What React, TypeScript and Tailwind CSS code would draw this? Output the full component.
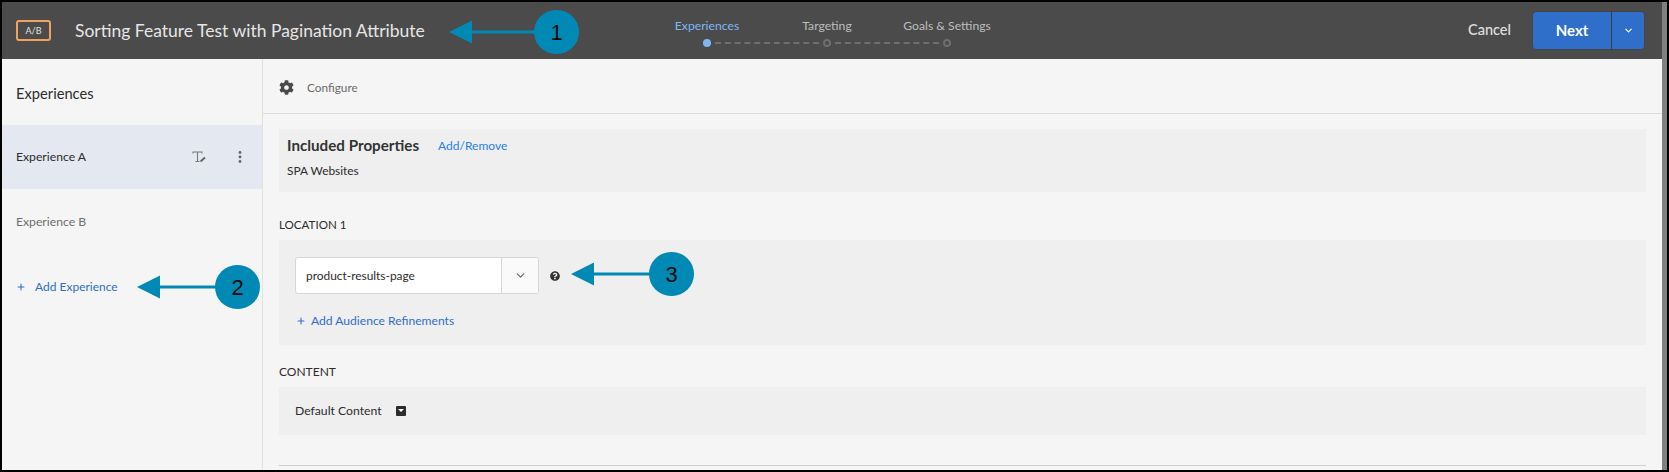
import { ChevronDown, Plus } from "lucide-react";
import { FaCog, FaQuestionCircle } from "react-icons/fa";

function Arrow({ length }: { length: number }) {
  return (
    <svg width={length} height="24" viewBox={`0 0 ${length} 24`} className="shrink-0">
      <path d={`M0 12 L23 0.5 V10.5 H${length} V13.5 H23 V23.5 Z`} fill="#0089b5" />
    </svg>
  );
}

function Badge({ n }: { n: number }) {
  return (
    <div className="-ml-px flex h-[44px] w-[45px] shrink-0 items-center justify-center rounded-full bg-[#0089b5] font-['Liberation_Sans',sans-serif] text-[22px] text-[#0a0a0a]">
      {n}
    </div>
  );
}

function TextEditIcon() {
  return (
    <svg width="14" height="12" viewBox="0 0 14 12" fill="none">
      <path d="M1 2.5V1H10V2.5M5.5 1V10.5M3.5 10.5H7.5" stroke="#777" strokeWidth="1.1" />
      <path d="M8.5 10.5 L13 6.5" stroke="#666" strokeWidth="2" />
    </svg>
  );
}

function Stepper() {
  const steps = [
    { label: "Experiences", active: true },
    { label: "Targeting", active: false },
    { label: "Goals & Settings", active: false },
  ];
  return (
    <div className="relative grid h-[32px] w-[360px] grid-cols-3 pt-[2px]">
      {steps.map((s) => (
        <div key={s.label} className="flex flex-col items-center">
          <span className={s.active ? "whitespace-nowrap text-[12.2px] leading-[18px] text-[#7fb7f5]" : "whitespace-nowrap text-[12.2px] leading-[18px] text-[#bdbdbd]"}>
            {s.label}
          </span>
          <span className={s.active ? "mt-[4px] h-2 w-2 rounded-full bg-[#7fb7f5]" : "mt-[4px] h-2 w-2 rounded-full border-2 border-[#6e6e6e]"} />
        </div>
      ))}
      <div className="absolute left-[68px] top-[27px] h-0 w-[104px] border-t-2 border-dashed border-[#6e6e6e]" />
      <div className="absolute left-[188px] top-[27px] h-0 w-[104px] border-t-2 border-dashed border-[#6e6e6e]" />
    </div>
  );
}

function Header() {
  return (
    <header className="flex h-[57px] shrink-0 items-center bg-[#4b4b4b]">
      <div className="flex w-[645px] shrink-0 items-center pl-[14px]">
        <div className="flex h-[21px] w-[35px] items-center justify-center rounded-[3px] border-2 border-[#f0a35e] text-[9px] text-[#e0e0e0]">
          A/B
        </div>
        <h1 className="ml-[24px] whitespace-nowrap pt-[1px] text-[17.5px] font-normal text-[#e6e6e6]">
          Sorting Feature Test with Pagination Attribute
        </h1>
      </div>
      <Stepper />
      <div className="ml-auto flex items-center pb-[1px] pr-[17px]">
        <span className="text-[14.5px] font-medium text-[#e0e0e0]">Cancel</span>
        <div className="ml-[21px] flex h-[39px] w-[113px] overflow-hidden rounded-[4px] border border-[#444] bg-[#2f6ec9] text-white">
          <span className="flex w-[79px] items-center justify-center border-r border-[#3d3d3d] text-[15px] font-bold">Next</span>
          <span className="flex flex-1 items-center justify-center">
            <ChevronDown size={11} strokeWidth={2.5} />
          </span>
        </div>
      </div>
    </header>
  );
}

function Sidebar() {
  return (
    <aside className="w-[261px] shrink-0 border-r border-[#e1e1e1]">
      <div className="flex h-[66px] items-center pl-[14px] pt-[3px] text-[14.7px] text-[#2c2c2c]">Experiences</div>
      <div className="flex h-[64px] items-center bg-[#e4e8f0] pl-[14px] text-[12.2px] text-[#2c2c2c]">
        <span className="w-[176px]">Experience A</span>
        <TextEditIcon />
        <svg width="4" height="12" viewBox="0 0 4 12" className="ml-[32px]" fill="#666">
          <circle cx="2" cy="1.5" r="1.4" />
          <circle cx="2" cy="6" r="1.4" />
          <circle cx="2" cy="10.5" r="1.4" />
        </svg>
      </div>
      <div className="flex h-[66px] items-center pl-[14px] text-[12.2px] text-[#6e6e6e]">Experience B</div>
      <div className="flex h-[64px] items-center pl-[14px] text-[12px] text-[#2f6ec9]">
        <Plus size={10} strokeWidth={2.5} />
        <span className="ml-[9px]">Add Experience</span>
      </div>
    </aside>
  );
}

function Main() {
  return (
    <main className="min-w-0 flex-1">
      <div className="flex h-[55px] items-center border-b border-[#dcdcdc] pl-[16px] pt-[3px] text-[11.8px] text-[#6b6b6b]">
        <FaCog size={15} className="text-[#4a4a4a]" />
        <span className="ml-[13px]">Configure</span>
      </div>
      <div className="pl-[16px] pr-[16px]">
        <section className="mt-[15px] h-[63px] bg-[#efefef] pl-[8px] pt-[5px]">
          <div className="flex h-[22px] items-center">
            <span className="text-[15.2px] font-bold text-[#333]">Included Properties</span>
            <span className="ml-[19px] pt-[1px] text-[12px] text-[#2680eb]">Add/Remove</span>
          </div>
          <p className="mt-[6px] text-[11.9px] leading-[18px] text-[#2c2c2c]">SPA Websites</p>
        </section>
        <p className="mt-[24px] text-[11.6px] leading-[18px] text-[#2c2c2c]">LOCATION 1</p>
        <section className="mt-[6px] h-[105px] bg-[#efefef] pl-[16px] pt-[17px]">
          <div className="flex items-center">
            <div className="flex h-[37px] w-[244px] items-center overflow-hidden rounded-[3px] border border-[#d6d6d6] bg-white">
              <span className="flex-1 pl-[10px] text-[11.9px] text-[#2c2c2c]">product-results-page</span>
              <span className="flex h-full w-[37px] items-center justify-center border-l border-[#d6d6d6] bg-[#fafafa]">
                <ChevronDown size={13} className="text-[#666]" />
              </span>
            </div>
            <FaQuestionCircle size={10} className="ml-[11px] text-[#333]" />
          </div>
          <div className="mt-[18px] flex items-center pl-[1px] text-[12.1px] leading-[18px] text-[#2f6ec9]">
            <Plus size={10} strokeWidth={2.5} />
            <span className="ml-[5px]">Add Audience Refinements</span>
          </div>
        </section>
        <p className="mt-[18px] text-[12px] leading-[18px] text-[#2c2c2c]">CONTENT</p>
        <section className="mt-[6px] flex h-[48px] items-center bg-[#efefef] pl-[16px] text-[12.2px] text-[#2c2c2c]">
          <span className="pt-[1px]">Default Content</span>
          <span className="mb-[1px] ml-[14px] flex h-[10px] w-[10px] items-center justify-center rounded-[1px] bg-[#2c2c2c]">
            <span className="h-0 w-0 border-x-[3px] border-t-[3px] border-x-transparent border-t-white" />
          </span>
        </section>
        <hr className="mt-[30px] border-t border-[#cfcfcf]" />
      </div>
    </main>
  );
}

export default function App() {
  return (
    <div className="relative h-[472px] w-[1669px] overflow-hidden bg-black p-[2px] font-['Lato',sans-serif]">
      <div className="flex h-full flex-col border-r-[5px] border-[#808080] bg-[#f5f5f5]">
        <Header />
        <div className="flex min-h-0 flex-1">
          <Sidebar />
          <Main />
        </div>
      </div>
      <div className="absolute left-[449px] top-[10px] flex items-center">
        <Arrow length={86} />
        <Badge n={1} />
      </div>
      <div className="absolute left-[137px] top-[265px] flex items-center">
        <Arrow length={79} />
        <Badge n={2} />
      </div>
      <div className="absolute left-[571px] top-[252px] flex items-center">
        <Arrow length={79} />
        <Badge n={3} />
      </div>
    </div>
  );
}
